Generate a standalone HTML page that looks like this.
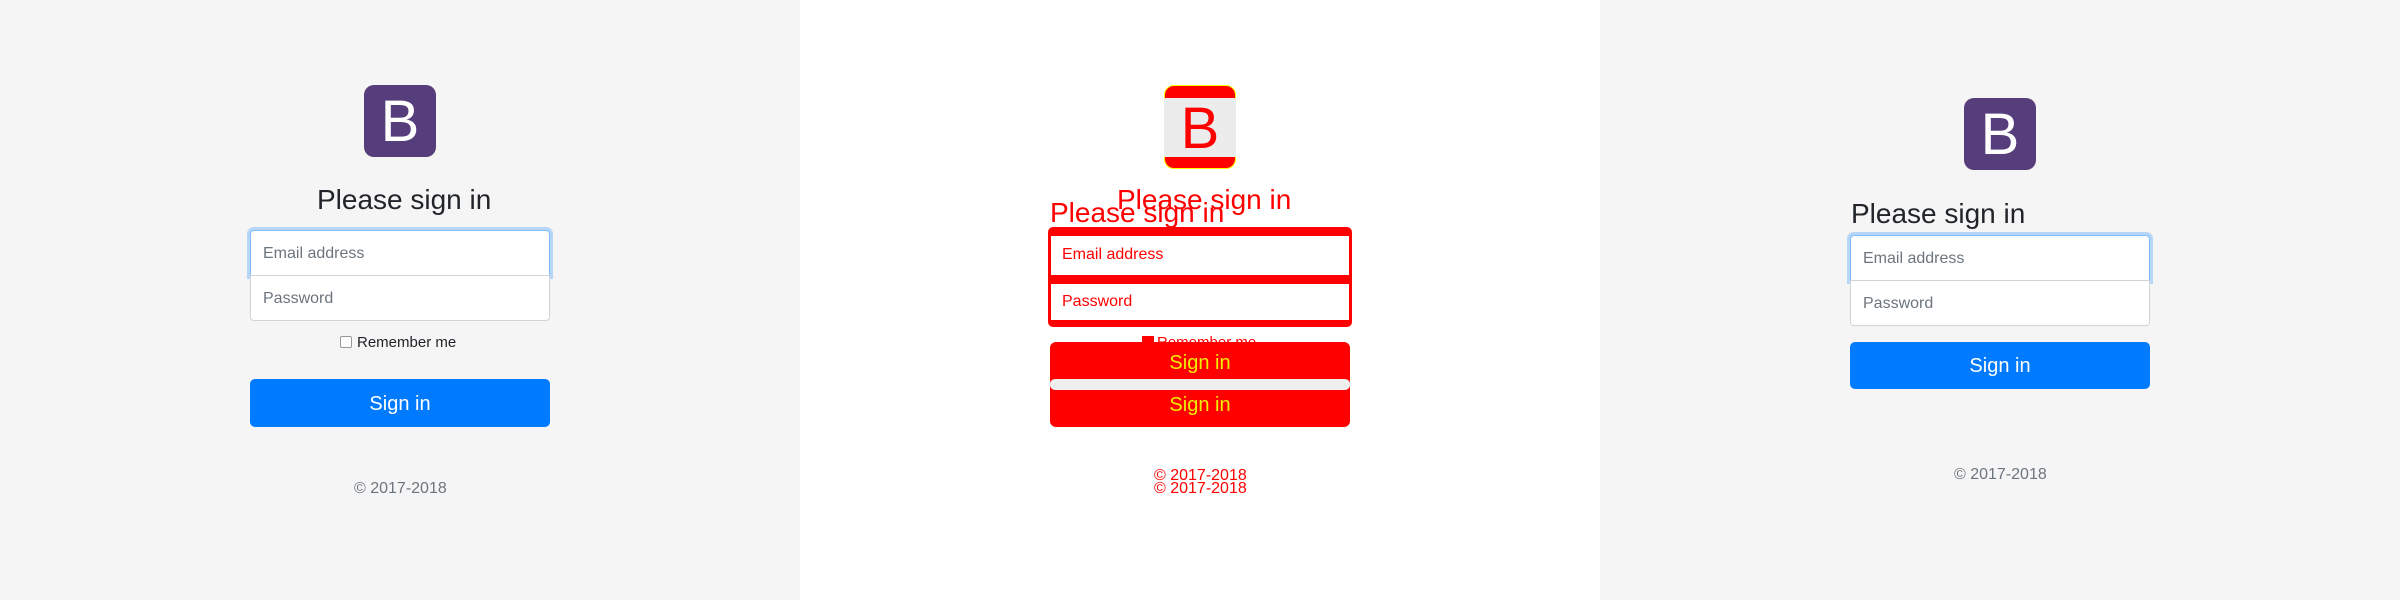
<!DOCTYPE html>
<html><head><meta charset="utf-8"><style>
*{box-sizing:border-box;margin:0;padding:0}
body{width:2400px;height:600px;position:relative;overflow:hidden;font-family:"Liberation Sans","DejaVu Sans",sans-serif;background:#f5f5f5}
.p{position:absolute;top:0;height:600px;width:800px}
.a{position:absolute}
.logo{width:72px;height:72px;border-radius:10px;background:#563d7c;color:#fff;font-size:58px;text-align:center;line-height:74px}
.h{font-size:28px;color:#212529;white-space:nowrap}
.in{width:300px;height:46px;background:#fff;border:1px solid #ced4da;font-size:16px;color:#6c757d;padding:13px 12px;line-height:20px}
.foc{border-color:#80bdff;box-shadow:0 0 0 3px rgba(0,123,255,.25)}
.btn{width:300px;height:48px;background:#007bff;border-radius:5px;color:#fff;font-size:20px;text-align:center;line-height:50px}
.ft{font-size:16px;color:#6c757d;white-space:nowrap}
</style></head><body>
<div class="p" style="left:0">
 <div class="a logo" style="left:364px;top:85px">B</div>
 <div class="a h" style="left:317px;top:184px">Please sign in</div>
 <div class="a in foc" style="left:250px;top:230px;border-radius:4px 4px 0 0">Email address</div>
 <div class="a in" style="left:250px;top:275px;border-radius:0 0 4px 4px">Password</div>
 <div class="a" style="left:340px;top:336px;width:12px;height:12px;border:1px solid #999;border-radius:2px;background:#fff"></div>
 <div class="a" style="left:357px;top:334px;font-size:15px;color:#212529">Remember me</div>
 <div class="a btn" style="left:250px;top:379px">Sign in</div>
 <div class="a ft" style="left:354px;top:480px">© 2017-2018</div>
</div>
<div class="p" style="left:800px;background:#fff">
 <div class="a" style="left:364px;top:85px;width:72px;height:84px;border-radius:10px;background:#f00;border:1px solid #ff0"></div>
 <div class="a" style="left:364px;top:98px;width:72px;height:59px;background:#ececec"></div>
 <div class="a" style="left:366px;top:94px;width:68px;height:68px;font-size:58px;text-align:center;line-height:70px;color:#f00">B</div>
 <div class="a h" style="left:317px;top:184px;color:#f00">Please sign in</div>
 <div class="a h" style="left:250px;top:197px;color:#f00">Please sign in</div>
 <div class="a" style="left:248px;top:227px;width:304px;height:100px;background:#f00;border-radius:5px"></div>
 <div class="a" style="left:251px;top:236px;width:298px;height:39px;background:#fff;font-size:16px;color:#f00;padding:10px 11px">Email address</div>
 <div class="a" style="left:251px;top:284px;width:298px;height:36px;background:#fff;font-size:16px;color:#f00;padding:9px 11px">Password</div>
 <div class="a" style="left:342px;top:336px;width:12px;height:12px;background:#f00"></div>
 <div class="a" style="left:357px;top:334px;font-size:15px;color:#f00">Remember me</div>
 <div class="a btn" style="left:250px;top:342px;height:85px;background:#f00;border-radius:6px"></div>
 <div class="a" style="left:250px;top:379px;width:300px;height:11px;background:#efefef;border-radius:5px"></div>
 <div class="a" style="left:250px;top:352px;width:300px;text-align:center;font-size:20px;color:#ee0">Sign in</div>
 <div class="a" style="left:250px;top:394px;width:300px;text-align:center;font-size:20px;color:#ee0">Sign in</div>
 <div class="a ft" style="left:354px;top:467px;color:#f00">© 2017-2018</div>
 <div class="a ft" style="left:354px;top:480px;color:#f00">© 2017-2018</div>
</div>
<div class="p" style="left:1600px">
 <div class="a logo" style="left:364px;top:98px">B</div>
 <div class="a h" style="left:251px;top:198px">Please sign in</div>
 <div class="a in foc" style="left:250px;top:235px;border-radius:4px 4px 0 0">Email address</div>
 <div class="a in" style="left:250px;top:280px;border-radius:0 0 4px 4px">Password</div>
 <div class="a btn" style="left:250px;top:342px;height:47px;line-height:49px">Sign in</div>
 <div class="a ft" style="left:354px;top:466px">© 2017-2018</div>
</div>
</body></html>
